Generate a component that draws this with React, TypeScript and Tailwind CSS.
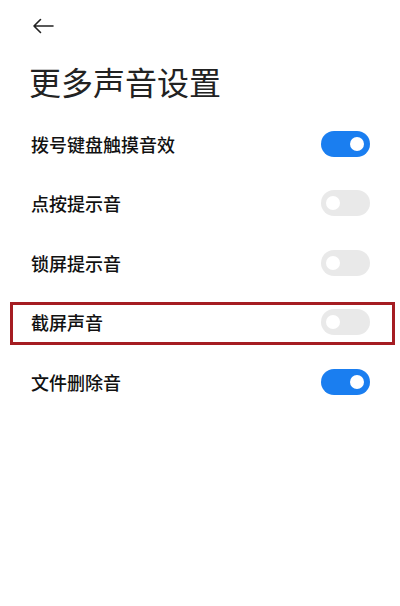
import React from "react";

const rows = [
  { label: "拨号键盘触摸音效", on: true },
  { label: "点按提示音", on: false },
  { label: "锁屏提示音", on: false },
  { label: "截屏声音", on: false, marked: true },
  { label: "文件删除音", on: true },
];

function Toggle({ on }: { on: boolean }) {
  return (
    <div
      className={
        on
          ? "flex h-[26px] w-[49px] items-center justify-end rounded-full bg-[#1a7ef0] px-[6px]"
          : "flex h-[26px] w-[49px] items-center justify-start rounded-full bg-[#e9e9e9] px-[5px]"
      }
    >
      <div className="h-[14px] w-[14px] rounded-full bg-white" />
    </div>
  );
}

export default function App() {
  return (
    <div
      className="h-[606px] w-[400px] bg-white text-[#1a1a1a]"
      style={{ fontFamily: '"Noto Sans CJK SC", "Noto Sans", sans-serif' }}
    >
      <div className="flex h-[52px] items-center pl-[32px] pt-[0px]">
        <svg width="22" height="16" viewBox="0 0 22 16" fill="none">
          <path
            d="M21 8H2M8.5 1.5L2 8l6.5 6.5"
            stroke="#222"
            strokeWidth="1.6"
            strokeLinecap="round"
            strokeLinejoin="round"
          />
        </svg>
      </div>
      <div className="pl-[29px] pt-[13px] text-[32px] leading-[32px] font-normal text-[#222]">
        更多声音设置
      </div>
      <div className="mt-[17px]">
        {rows.map((r) => (
          <div
            key={r.label}
            className="relative flex h-[59.5px] items-center justify-between pl-[31px] pr-[30px]"
          >
            <span className="text-[18px] font-medium leading-none text-[#111]">
              {r.label}
            </span>
            <Toggle on={r.on} />
            {r.marked && (
              <div className="absolute left-[10px] right-[5px] top-[9.5px] h-[43px] border-[3px] border-[#a51d22]" />
            )}
          </div>
        ))}
      </div>
    </div>
  );
}
